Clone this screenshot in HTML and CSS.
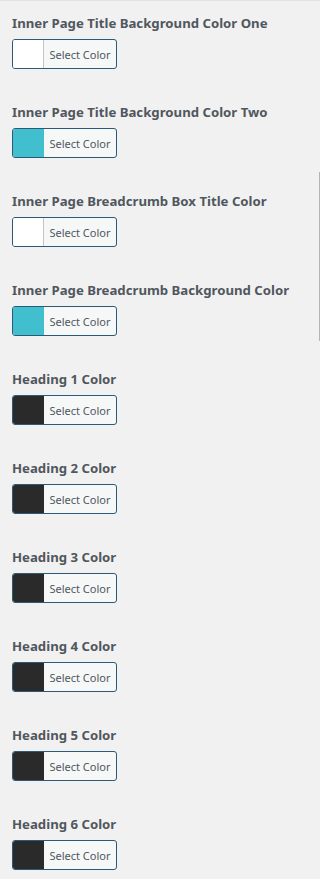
FILE: index.html
```html
<!DOCTYPE html>
<html lang="en">
<head>
  <meta charset="UTF-8">
  <meta name="viewport" content="width=device-width, initial-scale=1.0">
  <title>Colour Options</title>
  <link rel="stylesheet" href="styles.css">
</head>
<body>

<div class="panel">
  <div class="scroll-line"></div>

  <div class="control">
    <span class="control-title">Inner Page Title Background Color One</span>
    <button class="color-btn"><span class="swatch white"></span><span class="btn-text">Select Color</span></button>
  </div>

  <div class="control">
    <span class="control-title">Inner Page Title Background Color Two</span>
    <button class="color-btn"><span class="swatch teal"></span><span class="btn-text">Select Color</span></button>
  </div>

  <div class="control">
    <span class="control-title">Inner Page Breadcrumb Box Title Color</span>
    <button class="color-btn"><span class="swatch white"></span><span class="btn-text">Select Color</span></button>
  </div>

  <div class="control">
    <span class="control-title">Inner Page Breadcrumb Background Color</span>
    <button class="color-btn"><span class="swatch teal"></span><span class="btn-text">Select Color</span></button>
  </div>

  <div class="control">
    <span class="control-title">Heading 1 Color</span>
    <button class="color-btn"><span class="swatch dark"></span><span class="btn-text">Select Color</span></button>
  </div>

  <div class="control">
    <span class="control-title">Heading 2 Color</span>
    <button class="color-btn"><span class="swatch dark"></span><span class="btn-text">Select Color</span></button>
  </div>

  <div class="control">
    <span class="control-title">Heading 3 Color</span>
    <button class="color-btn"><span class="swatch dark"></span><span class="btn-text">Select Color</span></button>
  </div>

  <div class="control">
    <span class="control-title">Heading 4 Color</span>
    <button class="color-btn"><span class="swatch dark"></span><span class="btn-text">Select Color</span></button>
  </div>

  <div class="control">
    <span class="control-title">Heading 5 Color</span>
    <button class="color-btn"><span class="swatch dark"></span><span class="btn-text">Select Color</span></button>
  </div>

  <div class="control">
    <span class="control-title">Heading 6 Color</span>
    <button class="color-btn"><span class="swatch dark"></span><span class="btn-text">Select Color</span></button>
  </div>
</div>

</body>
</html>
```

FILE: styles.css
```css
body {
  font-family: 'Noto Sans', sans-serif;
  background-color: #f1f1f1;
  margin: 0;
  padding: 0;
}

.panel {
  position: relative;
  border-top: 1px solid #e2e2e2;
  padding: 12px 12px 0;
  min-height: 866px;
}

.scroll-line {
  position: absolute;
  right: 0;
  top: 171px;
  width: 1px;
  height: 169px;
  background-color: #b4b4b4;
}

.control {
  display: flex;
  flex-direction: column;
  align-items: flex-start;
  gap: 6px;
  margin-bottom: 33px;
}

.control-title {
  display: block;
  font-size: 13.2px;
  font-weight: bold;
  line-height: 20px;
  color: #50575e;
  white-space: nowrap;
}

.color-btn {
  display: flex;
  align-items: stretch;
  width: 105px;
  height: 30px;
  padding: 0;
  border: 1px solid #2b5a78;
  border-radius: 3px;
  background-color: #f6f7f7;
  overflow: hidden;
  cursor: pointer;
  font-family: inherit;
}

.swatch {
  width: 30px;
  border-right: 1px solid #c3c4c7;
}

.swatch.white {
  background-color: #fff;
}

.swatch.teal {
  background-color: #42bfcf;
  border-right-color: #42bfcf;
}

.swatch.dark {
  background-color: #2a2a2a;
  border-right-color: #2a2a2a;
}

.btn-text {
  flex: 1;
  display: flex;
  align-items: center;
  justify-content: center;
  font-size: 11px;
  color: #50575e;
}
```
